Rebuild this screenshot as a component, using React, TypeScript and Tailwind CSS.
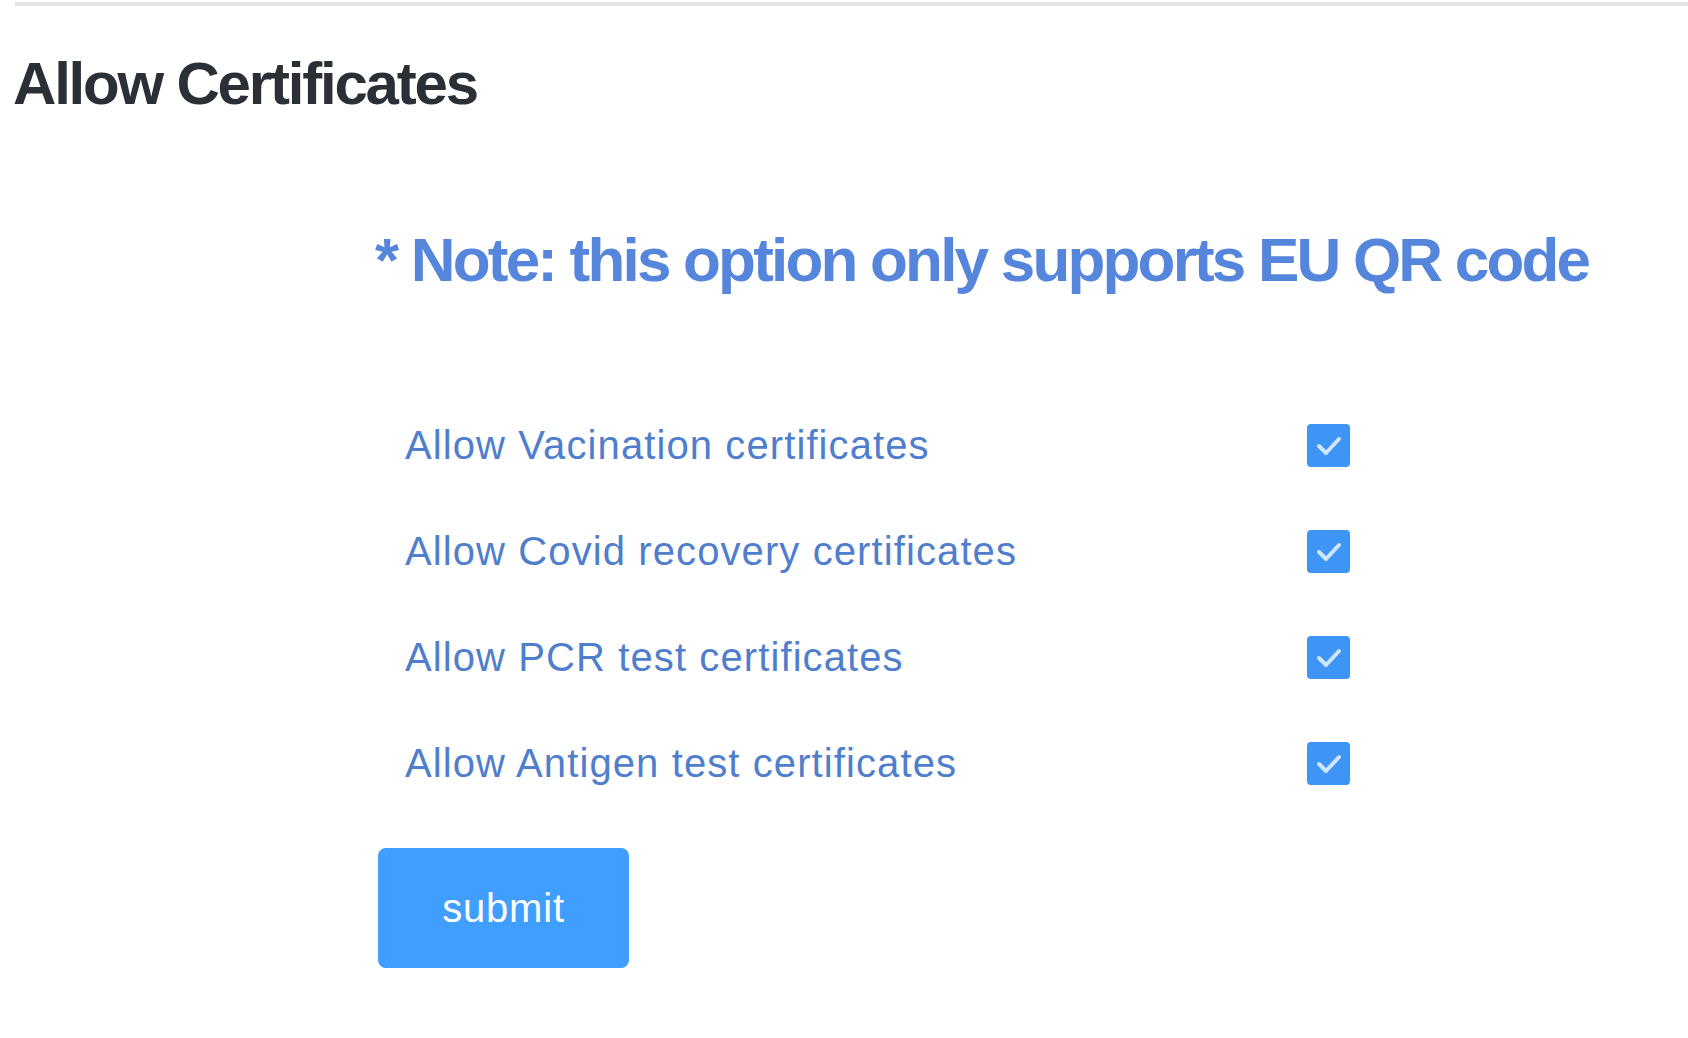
import React from "react";

const items = [
	"Allow Vacination certificates",
	"Allow Covid recovery certificates",
	"Allow PCR test certificates",
	"Allow Antigen test certificates",
];

const CheckBox = () => (
	<div className="w-[43px] h-[43px] rounded-[4px] bg-[#3f95f5] flex items-center justify-center">
		<svg width="43" height="43" viewBox="0 0 43 43">
			<path d="M12 22 L19 29 L32 15" fill="none" stroke="#cfe6ff" strokeWidth="4" strokeLinecap="round" strokeLinejoin="round" />
		</svg>
	</div>
);

const App = () => {
	return (
		<div className="w-[1688px] h-[1038px] bg-white overflow-hidden font-['Liberation_Sans',Arial,sans-serif]">
			<div className="ml-[15px] mt-[2px] h-[4px] bg-[#e4e4e4]" />
			<h1 className="ml-[13px] mt-[48px] text-[60px] leading-[60px] font-bold tracking-[-2.2px] text-[#2b2f36]">
				Allow Certificates
			</h1>
			<div className="ml-[375px] mt-[115px] text-[62px] leading-[62px] font-bold tracking-[-2.8px] text-[#5685dc] whitespace-nowrap">
				* Note: this option only supports EU QR code
			</div>
			<div className="mt-[101px] flex flex-col">
				{items.map((label) => (
					<div key={label} className="h-[106px] flex items-center pl-[405px]">
						<div className="w-[902px] text-[40px] leading-[40px] tracking-[1.1px] text-[#4f7ecd]">{label}</div>
						<CheckBox />
					</div>
				))}
			</div>
			<button className="ml-[378px] mt-[32px] w-[251px] h-[120px] rounded-[8px] bg-[#409eff] text-white text-[40px] leading-[40px] tracking-[0.8px]">
				submit
			</button>
		</div>
	);
};

export default App;
